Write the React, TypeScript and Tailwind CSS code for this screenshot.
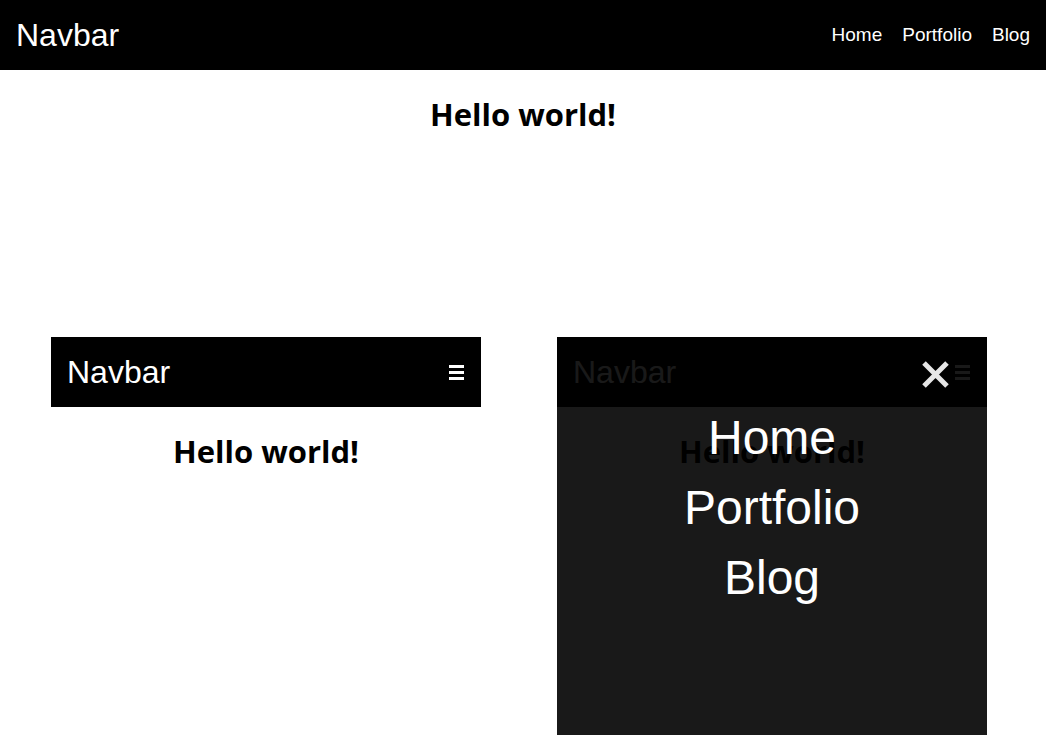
const links = ["Home", "Portfolio", "Blog"];

function Hamburger() {
  return (
    <div className="flex w-[15px] flex-col gap-[3px]">
      <span className="h-[3px] w-full bg-white" />
      <span className="h-[3px] w-full bg-white" />
      <span className="h-[3px] w-full bg-white" />
    </div>
  );
}

function Heading() {
  return (
    <h1 className="mt-[25px] text-center font-['Open_Sans',sans-serif] text-[31px] leading-[38px] font-bold text-black">
      Hello world!
    </h1>
  );
}

function MobilePanel({ open }: { open?: boolean }) {
  return (
    <div className="relative h-[430px] w-[430px] shrink-0 bg-white">
      <nav className="flex h-[70px] items-center justify-between bg-black pr-[17px] pl-4 font-['Liberation_Sans',Arial,sans-serif] text-white">
        <span className="text-[32px] leading-none">Navbar</span>
        <Hamburger />
      </nav>
      <Heading />

      {open && (
        <div className="absolute inset-0 bg-black/90">
          <button className="absolute top-[23px] right-[37px] flex h-[29px] w-[29px] items-center justify-center">
            <svg viewBox="0 0 29 29" className="h-[29px] w-[29px]">
              <path d="M3 3 L26 26 M26 3 L3 26" stroke="#e6e6e6" strokeWidth="5" />
            </svg>
          </button>
          <ul className="pt-[66px] text-center font-['Liberation_Sans',Arial,sans-serif] text-[48px] leading-[70px] text-white">
            {links.map((link) => (
              <li key={link}>{link}</li>
            ))}
          </ul>
        </div>
      )}
    </div>
  );
}

export default function App() {
  return (
    <div className="min-h-screen overflow-hidden bg-white">
      <nav className="flex h-[70px] items-center justify-between bg-black pr-4 pl-4 font-['Liberation_Sans',Arial,sans-serif] text-white">
        <span className="text-[32px] leading-none">Navbar</span>
        <ul className="flex gap-5 text-[19px]">
          {links.map((link) => (
            <li key={link}>{link}</li>
          ))}
        </ul>
      </nav>
      <Heading />

      <div className="mt-[204px] flex gap-[76px] pl-[51px]">
        <MobilePanel />
        <MobilePanel open />
      </div>
    </div>
  );
}
